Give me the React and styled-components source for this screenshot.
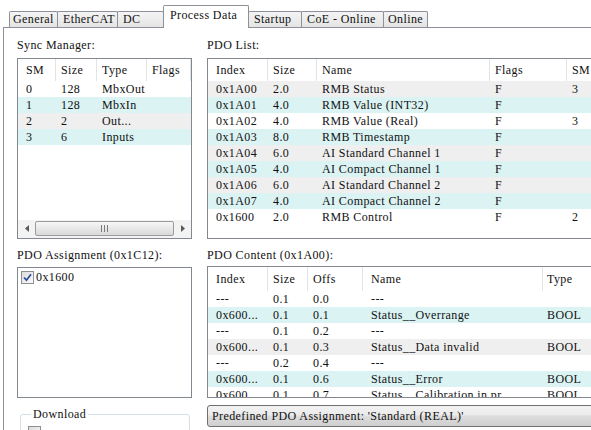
import React from 'react';
import styled, { createGlobalStyle } from 'styled-components';

const Global = createGlobalStyle`
  html, body { margin: 0; padding: 0; background: #fff; }
  body {
    font-family: "Liberation Serif", "DejaVu Serif", serif;
    font-size: 12px;
    letter-spacing: 0.4px;
    color: #111;
  }
`;

const Page = styled.div`
  width: 591px;
  height: 430px;
  overflow: hidden;
  background: #fff;
  display: flex;
  flex-direction: column;
`;

const TabStrip = styled.div`
  display: flex;
  align-items: flex-end;
  height: 27px;
  padding-left: 10px;
  box-sizing: border-box;
  flex-shrink: 0;
`;

const Tab = styled.div`
  box-sizing: border-box;
  width: ${(p) => p.$w}px;
  height: ${(p) => (p.$active ? 23 : 16)}px;
  margin-left: -1px;
  margin-bottom: ${(p) => (p.$active ? -1 : 0)}px;
  border: 1px solid #8d9098;
  border-bottom: none;
  border-radius: 2px 2px 0 0;
  background: ${(p) => (p.$active ? '#fff' : 'linear-gradient(#f4f4f4, #e4e4e4)')};
  position: relative;
  z-index: ${(p) => (p.$active ? 2 : 1)};
  padding: ${(p) => (p.$active ? 3 : 1)}px 0 0 ${(p) => p.$pad}px;
  line-height: 13px;
  white-space: nowrap;
`;

const Panel = styled.div`
  flex: 1;
  min-height: 0;
  margin-left: 3px;
  border-top: 1px solid #8d9098;
  border-left: 1px solid #8d9098;
  display: flex;
  gap: 15px;
  padding: 10px 0 0 13px;
`;

const Column = styled.div`
  flex: none;
  width: ${(p) => p.$w}px;
  display: flex;
  flex-direction: column;
`;

const Label = styled.div`
  height: 14px;
  line-height: 14px;
  white-space: nowrap;
  margin-top: ${(p) => p.$mt || 0}px;
`;

const ListBox = styled.div`
  box-sizing: border-box;
  flex: none;
  height: ${(p) => p.$h}px;
  margin-top: ${(p) => p.$mt}px;
  border: 1px solid #828790;
  background: #fff;
  overflow: hidden;
  display: flex;
  flex-direction: column;
`;

const HeaderRow = styled.div`
  display: grid;
  grid-template-columns: ${(p) => p.$cols};
  height: ${(p) => p.$h}px;
  flex: none;
`;

const HCell = styled.div`
  display: flex;
  align-items: center;
  padding-left: ${(p) => p.$pad}px;
  border-right: 1px solid #e3e4e6;
  white-space: nowrap;
  overflow: hidden;
`;

const Row = styled.div`
  display: grid;
  grid-template-columns: ${(p) => p.$cols};
  height: 16px;
  line-height: 16px;
  flex: none;
  background: ${(p) => p.$bg};
`;

const Cell = styled.div`
  padding-left: ${(p) => p.$pad}px;
  white-space: nowrap;
  overflow: hidden;
`;

const HScroll = styled.div`
  display: flex;
  height: 17px;
  margin-top: auto;
  flex: none;
  background: #f3f3f3;
  padding-bottom: 1px;
`;

const ScrollArrow = styled.div`
  width: 17px;
  flex: none;
  display: flex;
  align-items: center;
  justify-content: center;
`;

const Thumb = styled.div`
  flex: 1;
  margin: 1px 0;
  border: 1px solid #9c9c9c;
  border-radius: 2px;
  background: linear-gradient(#f7f7f7, #e8e8e8 50%, #d9d9d9);
  display: flex;
  align-items: center;
  justify-content: center;
`;

const CheckItem = styled.div`
  display: flex;
  align-items: center;
  gap: 2px;
  padding: 2px 0 0 3px;
  height: 14px;
  line-height: 14px;
`;

const CheckBox = styled.span`
  box-sizing: border-box;
  width: 13px;
  height: 13px;
  border: 1px solid #8f8f8f;
  background: linear-gradient(135deg, #dcdcdc, #fbfbfb);
  display: inline-flex;
  align-items: center;
  justify-content: center;
  flex: none;
`;

const GroupBox = styled.fieldset`
  margin: ${(p) => p.$mt}px 0 0 3px;
  width: 170px;
  box-sizing: border-box;
  border: 1px solid #d5dfe5;
  border-radius: 3px;
  padding: 5px 0 0 7px;
  height: 60px;
  min-width: 0;
`;

const Legend = styled.legend`
  padding: 0 2px;
  margin-left: 3px;
  line-height: 14px;
`;

const Button = styled.div`
  box-sizing: border-box;
  height: 22px;
  margin-top: 7px;
  width: 420px;
  border: 1px solid #707070;
  border-radius: 3px;
  background: linear-gradient(#f2f2f2, #ebebeb 45%, #dddddd 50%, #cfcfcf);
  padding-left: 4px;
  line-height: 20px;
  white-space: nowrap;
`;

const CYAN = '#dbf3f3';
const GRAY = '#efefef';
const WHITE = '#fff';

const syncCols = [
  { name: 'SM', w: 38, pad: 8 },
  { name: 'Size', w: 41, pad: 5 },
  { name: 'Type', w: 50, pad: 5 },
  { name: 'Flags', w: 44, pad: 5 },
];
const syncRows = [
  { bg: WHITE, c: ['0', '128', 'MbxOut', ''] },
  { bg: CYAN, c: ['1', '128', 'MbxIn', ''] },
  { bg: GRAY, c: ['2', '2', 'Out...', ''] },
  { bg: CYAN, c: ['3', '6', 'Inputs', ''] },
];

const listCols = [
  { name: 'Index', w: 60, pad: 8 },
  { name: 'Size', w: 49, pad: 5 },
  { name: 'Name', w: 173, pad: 5 },
  { name: 'Flags', w: 77, pad: 5 },
  { name: 'SM', w: 40, pad: 5 },
];
const listRows = [
  { bg: GRAY, c: ['0x1A00', '2.0', 'RMB Status', 'F', '3'] },
  { bg: CYAN, c: ['0x1A01', '4.0', 'RMB Value (INT32)', 'F', ''] },
  { bg: WHITE, c: ['0x1A02', '4.0', 'RMB Value (Real)', 'F', '3'] },
  { bg: CYAN, c: ['0x1A03', '8.0', 'RMB Timestamp', 'F', ''] },
  { bg: GRAY, c: ['0x1A04', '6.0', 'AI Standard Channel 1', 'F', ''] },
  { bg: CYAN, c: ['0x1A05', '4.0', 'AI Compact Channel 1', 'F', ''] },
  { bg: GRAY, c: ['0x1A06', '6.0', 'AI Standard Channel 2', 'F', ''] },
  { bg: CYAN, c: ['0x1A07', '4.0', 'AI Compact Channel 2', 'F', ''] },
  { bg: WHITE, c: ['0x1600', '2.0', 'RMB Control', 'F', '2'] },
];

const contentCols = [
  { name: 'Index', w: 60, pad: 8 },
  { name: 'Size', w: 40, pad: 5 },
  { name: 'Offs', w: 55, pad: 5 },
  { name: 'Name', w: 180, pad: 8 },
  { name: 'Type', w: 60, pad: 4 },
];
const contentRows = [
  { bg: WHITE, c: ['---', '0.1', '0.0', '---', ''] },
  { bg: CYAN, c: ['0x600...', '0.1', '0.1', 'Status__Overrange', 'BOOL'] },
  { bg: WHITE, c: ['---', '0.1', '0.2', '---', ''] },
  { bg: GRAY, c: ['0x600...', '0.1', '0.3', 'Status__Data invalid', 'BOOL'] },
  { bg: WHITE, c: ['---', '0.2', '0.4', '---', ''] },
  { bg: CYAN, c: ['0x600...', '0.1', '0.6', 'Status__Error', 'BOOL'] },
  { bg: WHITE, c: ['0x600...', '0.1', '0.7', 'Status__Calibration in pr', 'BOOL'] },
];

const tabs = [
  { t: 'General', w: 49, pad: 3 },
  { t: 'EtherCAT', w: 61, pad: 5 },
  { t: 'DC', w: 47, pad: 5 },
  { t: 'Process Data', w: 86, pad: 6, active: true },
  { t: 'Startup', w: 54, pad: 5 },
  { t: 'CoE - Online', w: 83, pad: 5 },
  { t: 'Online', w: 45, pad: 4 },
];

function Table({ cols, rows, headerH }) {
  const tpl = cols.map((c) => `${c.w}px`).join(' ');
  return (
    <>
      <HeaderRow $cols={tpl} $h={headerH}>
        {cols.map((c) => (
          <HCell key={c.name} $pad={c.pad}>{c.name}</HCell>
        ))}
      </HeaderRow>
      {rows.map((r, i) => (
        <Row key={i} $cols={tpl} $bg={r.bg}>
          {r.c.map((v, j) => (
            <Cell key={j} $pad={cols[j].pad}>{v}</Cell>
          ))}
        </Row>
      ))}
    </>
  );
}

const ArrowLeft = () => (
  <svg width="4" height="7" viewBox="0 0 4 7"><path d="M4 0 L0 3.5 L4 7 Z" fill="#5a5a5a" /></svg>
);
const ArrowRight = () => (
  <svg width="4" height="7" viewBox="0 0 4 7"><path d="M0 0 L4 3.5 L0 7 Z" fill="#5a5a5a" /></svg>
);
const Grip = () => (
  <svg width="7" height="7" viewBox="0 0 7 7">
    <path d="M0.5 0 V7 M3.5 0 V7 M6.5 0 V7" stroke="#7a7a7a" strokeWidth="1" />
  </svg>
);
const Check = () => (
  <svg width="9" height="9" viewBox="0 0 9 9">
    <path d="M1 4.5 L3.5 7.2 L8 1.2" stroke="#2f4f9e" strokeWidth="1.8" fill="none" />
  </svg>
);

export default function App() {
  return (
    <Page>
      <Global />
      <TabStrip>
        {tabs.map((t) => (
          <Tab key={t.t} $w={t.w} $pad={t.pad} $active={t.active}>{t.t}</Tab>
        ))}
      </TabStrip>
      <Panel>
        <Column $w={175}>
          <Label>Sync Manager:</Label>
          <ListBox $h={181} $mt={6}>
            <Table cols={syncCols} rows={syncRows} headerH={22} />
            <HScroll>
              <ScrollArrow><ArrowLeft /></ScrollArrow>
              <Thumb><Grip /></Thumb>
              <ScrollArrow><ArrowRight /></ScrollArrow>
            </HScroll>
          </ListBox>
          <Label $mt={9}>PDO Assignment (0x1C12):</Label>
          <ListBox $h={131} $mt={5}>
            <CheckItem>
              <CheckBox><Check /></CheckBox>
              <span>0x1600</span>
            </CheckItem>
          </ListBox>
          <GroupBox $mt={9}>
            <Legend>Download</Legend>
            <CheckBox />
          </GroupBox>
        </Column>
        <Column $w={420}>
          <Label>PDO List:</Label>
          <ListBox $h={181} $mt={6}>
            <Table cols={listCols} rows={listRows} headerH={22} />
          </ListBox>
          <Label $mt={9}>PDO Content (0x1A00):</Label>
          <ListBox $h={132} $mt={4}>
            <Table cols={contentCols} rows={contentRows} headerH={24} />
          </ListBox>
          <Button>Predefined PDO Assignment: 'Standard (REAL)'</Button>
        </Column>
      </Panel>
    </Page>
  );
}
